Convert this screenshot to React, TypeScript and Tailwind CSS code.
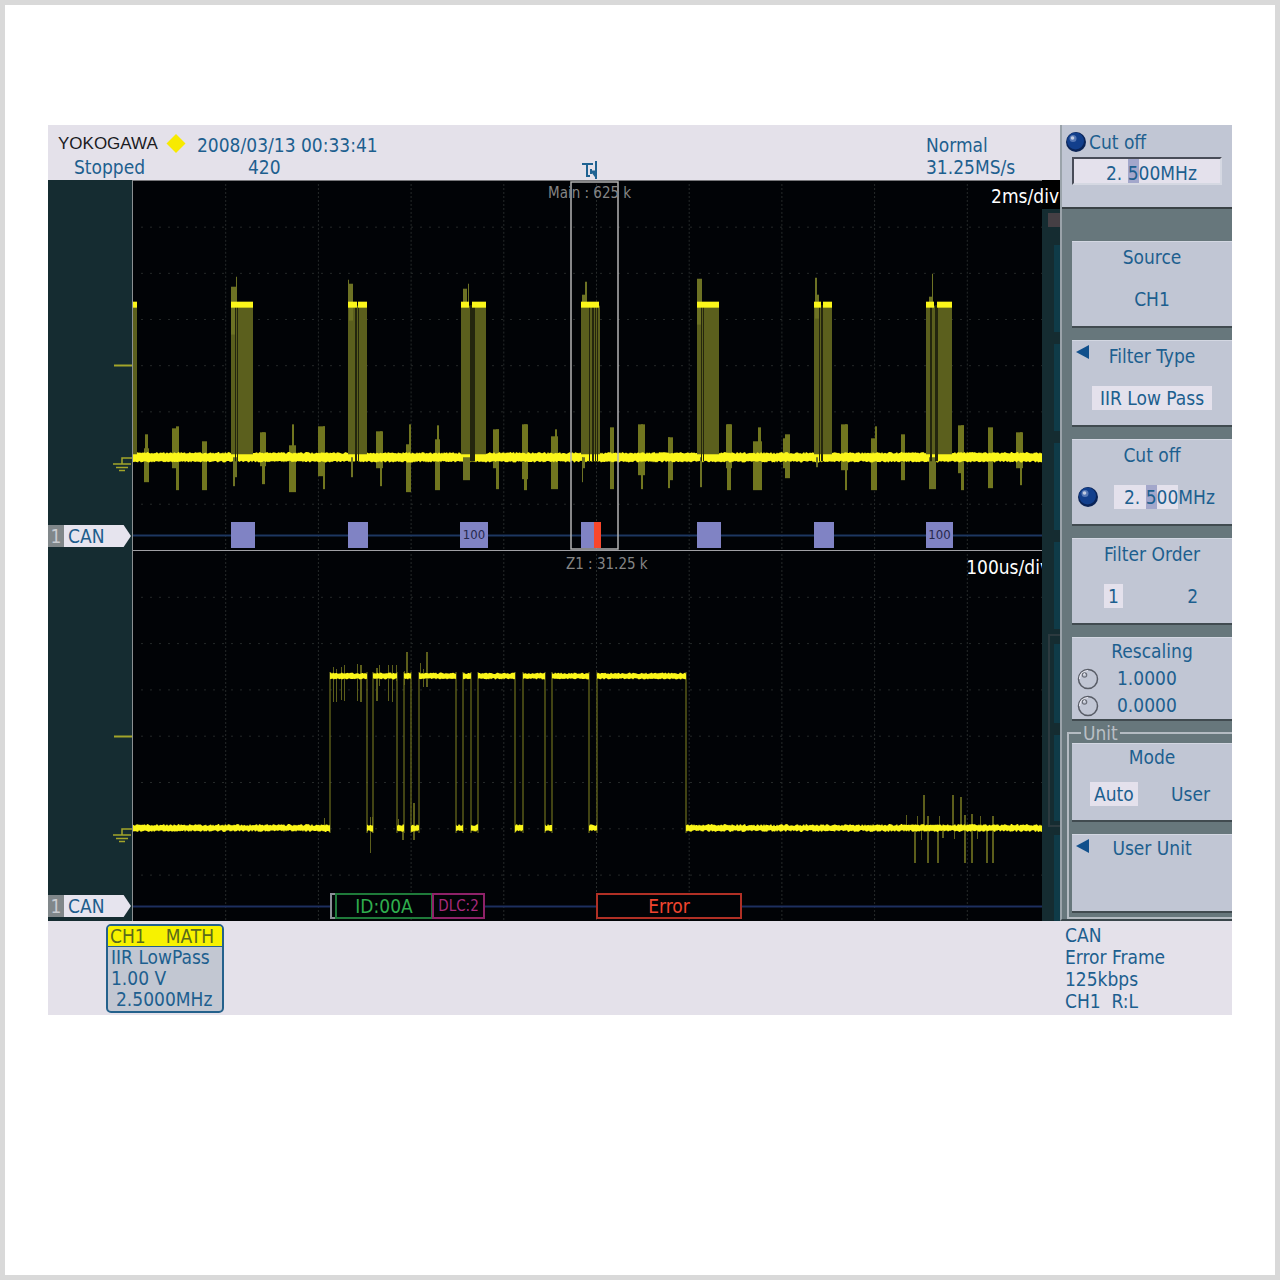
import React, { useState } from 'react';
import clsx from 'clsx';

// Chart space is 909 x 370 for each waveform window
const CHART_W = 909;
const CHART_H = 370;
const BASE_Y = 277;
const HIGH_Y = 125;

interface Bar {
  x: number;
  w: number;
  top: number;
  bottom: number;
}

interface Burst {
  x: number;
  w: number;
  gaps: [number, number][];
  highs: [number, number][];
  spikes: Bar[];
}

const BURSTS: Burst[] = [
  { x: 0, w: 4, gaps: [], highs: [[0, 4]], spikes: [] },
  {
    x: 98, w: 22, gaps: [[102, 1], [104, 1]], highs: [[98, 22]],
    spikes: [{ x: 98, w: 5, top: 106, bottom: 154 }, { x: 103, w: 1, top: 96, bottom: 124 }, { x: 100, w: 2, top: 277, bottom: 306 }, { x: 102, w: 2, top: 277, bottom: 297 }],
  },
  {
    x: 215, w: 19, gaps: [[222, 2], [225, 1]], highs: [[215, 9], [225, 9]],
    spikes: [{ x: 216, w: 4, top: 103, bottom: 140 }, { x: 215, w: 1, top: 99, bottom: 124 }, { x: 218, w: 2, top: 277, bottom: 297 }],
  },
  {
    x: 328, w: 25, gaps: [[337, 5]], highs: [[328, 8], [339, 14]],
    spikes: [{ x: 330, w: 4, top: 108, bottom: 124 }, { x: 335, w: 1, top: 103, bottom: 124 }, { x: 330, w: 7, top: 277, bottom: 300 }],
  },
  {
    x: 448, w: 19, gaps: [[456, 1], [459, 2], [462, 1], [464, 1]], highs: [[448, 18]],
    spikes: [{ x: 449, w: 4, top: 114, bottom: 124 }, { x: 452, w: 2, top: 101, bottom: 124 }, { x: 449, w: 3, top: 277, bottom: 288 }, { x: 449, w: 1, top: 277, bottom: 302 }],
  },
  {
    x: 564, w: 22, gaps: [[568, 1], [570, 1]], highs: [[564, 22]],
    spikes: [{ x: 564, w: 5, top: 98, bottom: 144 }, { x: 567, w: 2, top: 277, bottom: 307 }],
  },
  {
    x: 681, w: 18, gaps: [[686, 1], [688, 2]], highs: [[681, 7], [690, 9]],
    spikes: [{ x: 682, w: 2, top: 97, bottom: 124 }, { x: 682, w: 4, top: 114, bottom: 138 }, { x: 683, w: 2, top: 277, bottom: 287 }],
  },
  {
    x: 793, w: 26, gaps: [[797, 2], [802, 3]], highs: [[793, 8], [804, 15]],
    spikes: [{ x: 799, w: 1, top: 93, bottom: 124 }, { x: 796, w: 4, top: 116, bottom: 124 }, { x: 796, w: 7, top: 277, bottom: 309 }],
  },
];

// Crosstalk blips between the bursts, a wide body plus a thin tail
const BLIPS: Bar[] = [
  { x: 12, w: 3, top: 254, bottom: 280 }, { x: 11, w: 5, top: 268, bottom: 302 },
  { x: 39, w: 7, top: 248, bottom: 288 }, { x: 43, w: 3, top: 246, bottom: 310 },
  { x: 69, w: 5, top: 261, bottom: 310 },
  { x: 127, w: 6, top: 252, bottom: 286 }, { x: 129, w: 3, top: 252, bottom: 304 },
  { x: 156, w: 7, top: 265, bottom: 312 }, { x: 159, w: 2, top: 244, bottom: 280 },
  { x: 185, w: 7, top: 246, bottom: 296 }, { x: 190, w: 2, top: 246, bottom: 309 },
  { x: 243, w: 7, top: 251, bottom: 288 }, { x: 247, w: 2, top: 251, bottom: 306 },
  { x: 273, w: 5, top: 264, bottom: 312 }, { x: 276, w: 2, top: 244, bottom: 280 },
  { x: 302, w: 5, top: 259, bottom: 310 }, { x: 304, w: 2, top: 245, bottom: 280 },
  { x: 360, w: 6, top: 249, bottom: 288 }, { x: 363, w: 3, top: 249, bottom: 309 },
  { x: 389, w: 6, top: 244, bottom: 299 }, { x: 391, w: 3, top: 244, bottom: 310 },
  { x: 418, w: 7, top: 256, bottom: 309 }, { x: 422, w: 2, top: 249, bottom: 280 },
  { x: 477, w: 4, top: 247, bottom: 309 },
  { x: 505, w: 7, top: 244, bottom: 295 }, { x: 508, w: 2, top: 244, bottom: 309 },
  { x: 535, w: 5, top: 257, bottom: 300 }, { x: 535, w: 2, top: 257, bottom: 308 },
  { x: 593, w: 6, top: 244, bottom: 288 }, { x: 594, w: 4, top: 244, bottom: 310 },
  { x: 620, w: 9, top: 261, bottom: 310 }, { x: 625, w: 3, top: 247, bottom: 280 },
  { x: 650, w: 7, top: 258, bottom: 288 }, { x: 652, w: 5, top: 254, bottom: 298 },
  { x: 708, w: 7, top: 244, bottom: 290 }, { x: 712, w: 2, top: 244, bottom: 310 },
  { x: 738, w: 6, top: 258, bottom: 310 }, { x: 742, w: 2, top: 246, bottom: 280 },
  { x: 768, w: 4, top: 254, bottom: 300 },
  { x: 825, w: 6, top: 245, bottom: 293 }, { x: 828, w: 3, top: 245, bottom: 310 },
  { x: 855, w: 5, top: 247, bottom: 308 },
  { x: 883, w: 7, top: 252, bottom: 288 }, { x: 887, w: 2, top: 252, bottom: 305 },
];

const FRAMES = [
  { x: 98, w: 24 },
  { x: 215, w: 20 },
  { x: 327, w: 28, text: '100' },
  { x: 448, w: 20, error: true },
  { x: 564, w: 24 },
  { x: 681, w: 20 },
  { x: 793, w: 27, text: '100' },
];

// [start, end] of the recessive level in the zoomed window
const HIGHS: [number, number][] = [
  [197, 234], [240, 264], [271, 278], [286, 323], [330, 338],
  [345, 382], [390, 412], [419, 456], [464, 553],
];

const ZOOM_SPIKES: Bar[] = [
  { x: 200, w: 1, top: 116, bottom: 151 }, { x: 203, w: 1, top: 118, bottom: 151 },
  { x: 208, w: 1, top: 116, bottom: 149 }, { x: 211, w: 1, top: 114, bottom: 150 },
  { x: 224, w: 1, top: 113, bottom: 150 }, { x: 227, w: 2, top: 114, bottom: 151 },
  { x: 243, w: 2, top: 117, bottom: 150 }, { x: 246, w: 1, top: 114, bottom: 135 },
  { x: 255, w: 1, top: 114, bottom: 150 }, { x: 259, w: 1, top: 114, bottom: 151 }, { x: 263, w: 1, top: 114, bottom: 130 },
  { x: 273, w: 2, top: 101, bottom: 125 }, { x: 271, w: 1, top: 120, bottom: 134 },
  { x: 287, w: 1, top: 112, bottom: 128 }, { x: 290, w: 1, top: 118, bottom: 136 }, { x: 293, w: 2, top: 101, bottom: 136 },
  { x: 237, w: 1, top: 266, bottom: 302 }, { x: 239, w: 1, top: 266, bottom: 282 },
  { x: 269, w: 2, top: 277, bottom: 289 }, { x: 265, w: 1, top: 268, bottom: 280 },
  { x: 280, w: 2, top: 252, bottom: 289 },
  { x: 191, w: 1, top: 267, bottom: 278 },
  { x: 773, w: 1, top: 264, bottom: 277 }, { x: 781, w: 2, top: 277, bottom: 312 },
  { x: 784, w: 1, top: 265, bottom: 277 }, { x: 790, w: 2, top: 244, bottom: 277 },
  { x: 788, w: 1, top: 277, bottom: 289 }, { x: 794, w: 2, top: 265, bottom: 312 },
  { x: 804, w: 2, top: 277, bottom: 312 }, { x: 806, w: 1, top: 265, bottom: 277 },
  { x: 809, w: 2, top: 277, bottom: 287 }, { x: 819, w: 2, top: 244, bottom: 277 },
  { x: 821, w: 1, top: 277, bottom: 288 }, { x: 827, w: 2, top: 246, bottom: 277 },
  { x: 831, w: 2, top: 264, bottom: 312 }, { x: 838, w: 2, top: 263, bottom: 312 },
  { x: 844, w: 1, top: 277, bottom: 288 }, { x: 847, w: 1, top: 265, bottom: 277 },
  { x: 853, w: 2, top: 277, bottom: 312 }, { x: 859, w: 2, top: 265, bottom: 312 },
];

const noise = (n: number) => {
  const v = Math.sin(n * 127.1) * 43758.5453;
  return v - Math.floor(v);
};

// Thick noisy ribbon along a level
const ribbon = (x1: number, x2: number, y: number, half: number, jitter: number) => {
  const upper: string[] = [];
  const lower: string[] = [];
  for (let x = x1; x <= x2; x += 1) {
    upper.push(`${x},${y - half - noise(x + y) * jitter}`);
    lower.unshift(`${x},${y + half + noise(x * 3 + y) * jitter}`);
  }
  return [...upper, ...lower].join(' ');
};

const pct = (v: number) => `${(v / CHART_W) * 100}%`;

const Graticule = () => (
  <g>
    {[1, 2, 3, 4, 5, 6, 7, 8, 9].map((i) => (
      <line key={i} x1={i * 92.7} x2={i * 92.7} y1={3} y2={CHART_H} stroke="#272b2b" strokeDasharray="2 2" />
    ))}
    {[1, 2, 3, 4, 5, 6, 7].map((i) => (
      <line key={i} x1={8} x2={CHART_W} y1={i * 46.3} y2={i * 46.3} stroke="#252929" strokeDasharray="2 7" />
    ))}
  </g>
);

const MainTrace = () => (
  <svg className="absolute inset-0 w-full h-full" viewBox={`0 0 ${CHART_W} ${CHART_H}`} preserveAspectRatio="none">
    <Graticule />
    <line x1={0} x2={CHART_W} y1={355.5} y2={355.5} stroke="#1d3760" strokeWidth={2} />
    <g fill="#71761f">
      {BLIPS.map((b, i) => <rect key={i} x={b.x} y={b.top} width={b.w} height={b.bottom - b.top} />)}
    </g>
    <polygon points={ribbon(0, CHART_W, BASE_Y, 3.5, 1.8)} fill="#fbf61a" />
    {BURSTS.map((b) => (
      <g key={b.x}>
        <rect x={b.x} y={HIGH_Y} width={b.w} height={149} fill="#5b5f1d" />
        {b.spikes.map((s, i) => <rect key={i} x={s.x} y={s.top} width={s.w} height={s.bottom - s.top} fill="#6d7224" />)}
        {b.gaps.map(([x, w]) => <rect key={x} x={x} y={HIGH_Y} width={w} height={156} fill="#24260e" />)}
        {b.highs.map(([x, w]) => <rect key={x} x={x} y={121} width={w} height={6} fill="#fbf61a" />)}
      </g>
    ))}
    <rect x={438} y={1} width={47} height={368} fill="none" stroke="#b4b4b4" strokeWidth={1.5} />
  </svg>
);

const ZoomTrace = () => (
  <svg className="absolute inset-0 w-full h-full" viewBox={`0 0 ${CHART_W} ${CHART_H}`} preserveAspectRatio="none">
    <Graticule />
    <g stroke="#1d2f5e" strokeWidth={2}>
      <line x1={0} x2={197} y1={355.5} y2={355.5} />
      <line x1={352} x2={463} y1={355.5} y2={355.5} />
      <line x1={609} x2={CHART_W} y1={355.5} y2={355.5} />
    </g>
    <g fill="#5c5e1b">
      {ZOOM_SPIKES.map((s, i) => <rect key={i} x={s.x} y={s.top} width={s.w} height={s.bottom - s.top} />)}
    </g>
    <g stroke="#6d6f1d" strokeWidth={1.2}>
      {HIGHS.flat().map((x) => <line key={x} x1={x} x2={x} y1={HIGH_Y - 4} y2={BASE_Y + 5} />)}
    </g>
    <g fill="#fbf61a">
      <polygon points={ribbon(0, 197, BASE_Y, 2, 2)} />
      {HIGHS.map(([a, b]) => <polygon key={a} points={ribbon(a, b, HIGH_Y, 2, 1.5)} />)}
      {HIGHS.slice(1).map(([a], i) => (
        <polygon key={a} points={ribbon(HIGHS[i][1], a, BASE_Y, 2, 2)} />
      ))}
      <polygon points={ribbon(553, CHART_W, BASE_Y, 2, 2)} />
    </g>
  </svg>
);

const Gutter = () => (
  <div className="relative w-[85px] shrink-0 bg-[#152c31] border-r border-[#8b9092]">
    <svg className="absolute right-0 top-[180px] w-5 h-[120px]" viewBox="0 0 20 120" fill="none" stroke="#a3a52a" strokeWidth={1.5}>
      <path d="M2 5.500H20" strokeWidth={2} />
      <path d="M20 98H10v6M1 104h18M4 107.500h12M7 110.500h6" />
    </svg>
    <div className="absolute left-0 bottom-[4px] flex h-[22px] w-[83px] text-[19px] leading-[22px]">
      <span className="w-4 bg-[#80878a] text-center text-[#c9ccd1]">1</span>
      <span className="flex-1 bg-[#e6e4ee] pl-1 text-[#1d5d8c] [clip-path:polygon(0_0,89%_0,100%_50%,89%_100%,0_100%)]">CAN</span>
    </div>
  </div>
);

const BlueKnob = ({ className }: { className?: string }) => (
  <svg className={clsx('w-5 h-5 shrink-0', className)} viewBox="0 0 20 20">
    <circle cx="10" cy="10" r="10" fill="#0a2457" />
    <circle cx="9.500" cy="9" r="8.500" fill="#123f8c" />
    <circle cx="7" cy="6.500" r="3.500" fill="#5577b4" />
    <circle cx="6.500" cy="6" r="1.800" fill="#c3cde2" />
  </svg>
);

const RingKnob = () => (
  <svg className="w-[22px] h-[22px] shrink-0" viewBox="0 0 22 22" fill="none">
    <circle cx="11" cy="11" r="9.500" stroke="#585c66" strokeWidth="1.500" />
    <path d="M2.500 11a8.500 8.500 0 0 1 8.500-8.500" stroke="#e8e8f0" strokeWidth="1.200" />
    <circle cx="7.500" cy="7" r="2.200" stroke="#6b6f79" strokeWidth="1.200" />
    <path d="M6.500 6.500l1.500-1" stroke="#f0f0f5" strokeWidth="1.200" />
  </svg>
);

const Arrow = () => (
  <svg className="absolute left-1 top-1 w-[14px] h-[14px]" viewBox="0 0 14 14">
    <path d="M0 7 13 0v14z" fill="#11508c" />
  </svg>
);

const keyClass = 'relative w-full flex flex-col justify-start bg-[#c1c6d4] border-b-2 border-[#414b50] border-t border-t-[#d3d7e2] text-center';

const Option = ({ name, value, checked, onPick }: { name: string; value: string; checked: boolean; onPick: (v: string) => void }) => (
  <label className={clsx('px-1 leading-6 cursor-pointer', checked && 'bg-[#e4e1ec]')}>
    <input type="radio" className="sr-only" name={name} checked={checked} onChange={() => onPick(value)} />
    {value}
  </label>
);

const SoftKeys = () => {
  const [cutoff, setCutoff] = useState('2. 500MHz');
  const [order, setOrder] = useState('1');
  const [mode, setMode] = useState('Auto');
  const [gain, setGain] = useState('1.0000');
  const [offset, setOffset] = useState('0.0000');

  return (
    <aside className="w-[172px] shrink-0 border-l-2 border-[#9aa3aa] bg-[#67777c] border-b-2 border-b-[#3a464b]">
      <div className="h-[84px] bg-[#c1c6d4] border-b-2 border-[#3a4246] pt-1">
        <label htmlFor="cutoff" className="flex items-center gap-[3px] pl-1 leading-[26px]">
          <BlueKnob />
          Cut off
        </label>
        <div className="relative mx-[10px] mt-[2px] h-7 bg-[#e4e1ec] border-2 border-[#484c58] border-b-[#d5d8e2] border-r-[#d5d8e2]">
          <span className="absolute left-[54px] top-0 w-[11px] h-full bg-[#a3a7cb]" />
          <input
            id="cutoff"
            className="relative w-full h-full pl-8 pb-[3px] bg-transparent outline-none"
            value={cutoff}
            onChange={(e) => setCutoff(e.target.value)}
          />
        </div>
      </div>

      <div className="pl-[10px] pt-8 flex flex-col gap-3">
        <button className={clsx(keyClass, 'h-[87px] gap-[18px] pt-[3px]')}>
          <span className="leading-6">Source</span>
          <span className="leading-6">CH1</span>
        </button>
        <button className={clsx(keyClass, 'h-[87px] gap-[18px] pt-[3px] items-center')}>
          <Arrow />
          <span className="leading-6">Filter Type</span>
          <span className="leading-6 px-2 bg-[#e4e1ec]">IIR Low Pass</span>
        </button>
        <button className={clsx(keyClass, 'h-[87px] gap-[18px] pt-[3px]')}>
          <span className="leading-6">Cut off</span>
          <span className="flex items-center pl-[6px] leading-6">
            <BlueKnob className="mr-4" />
            <span className="bg-[#e4e1ec] pl-[10px]">
              <span className="whitespace-pre">2. </span>
              <span className="inline-block bg-[#a3a7cb]">5</span>
              <span>00</span>
            </span>
            <span>MHz</span>
          </span>
        </button>
        <div className={clsx(keyClass, 'h-[87px] gap-[18px] pt-[3px]')} role="radiogroup" aria-label="Filter Order">
          <div className="leading-6">Filter Order</div>
          <div className="flex justify-between pl-8 pr-[30px]">
            <Option name="order" value="1" checked={order === '1'} onPick={setOrder} />
            <Option name="order" value="2" checked={order === '2'} onPick={setOrder} />
          </div>
        </div>
        <div className={clsx(keyClass, 'h-[84px]')}>
          <div className="leading-[27px]">Rescaling</div>
          <label className="flex items-center h-[27px] gap-[18px] pl-[5px]">
            <RingKnob />
            <input aria-label="Rescaling gain" className="w-[80px] bg-transparent outline-none" value={gain} onChange={(e) => setGain(e.target.value)} />
          </label>
          <label className="flex items-center h-[27px] gap-[18px] pl-[5px]">
            <RingKnob />
            <input aria-label="Rescaling offset" className="w-[80px] bg-transparent outline-none" value={offset} onChange={(e) => setOffset(e.target.value)} />
          </label>
        </div>
      </div>

      <fieldset className="ml-[5px] mt-[2px] pl-[3px] pb-1 border-2 border-r-0 border-[#b4bbc2]">
        <legend className="ml-[9px] px-[2px] leading-5 text-[#b9bfc5]">Unit</legend>
        <div className="flex flex-col gap-3">
          <div className={clsx(keyClass, 'h-[79px] gap-[11px]')} role="radiogroup" aria-label="Mode">
            <div className="leading-[27px]">Mode</div>
            <div className="flex justify-between px-[18px]">
              <Option name="mode" value="Auto" checked={mode === 'Auto'} onPick={setMode} />
              <Option name="mode" value="User" checked={mode === 'User'} onPick={setMode} />
            </div>
          </div>
          <button className={clsx(keyClass, 'h-[79px]')}>
            <Arrow />
            <span className="leading-[27px]">User Unit</span>
          </button>
        </div>
      </fieldset>
    </aside>
  );
};

// Second menu column, mostly covered by the soft keys
const HiddenMenu = () => (
  <div className="w-[18px] shrink-0 flex flex-col bg-black">
    <div className="h-[29px]" />
    <div className="flex-1 flex flex-col bg-[#152c31] pt-1">
      <div className="ml-[6px] h-[14px] bg-[#453f44]" />
      <div className="ml-3 mt-[18px] flex-1 flex flex-col gap-3">
        <div className="h-[87px] bg-[#0f3b48]" />
        <div className="h-[87px] bg-[#0f3b48]" />
        <div className="h-[87px] bg-[#0f3b48]" />
        <div className="h-[87px] bg-[#0f3b48]" />
      </div>
      <div className="ml-[6px] pl-1 pt-2 pb-1 border-l-2 border-y-2 border-[#2c3a3f] flex flex-col gap-3">
        <div className="h-[79px] bg-[#0f3b48]" />
        <div className="h-[86px] bg-[#0f3b48]" />
      </div>
      <div className="ml-3 mt-2 h-[86px] bg-[#0f3b48]" />
    </div>
  </div>
);

const Header = () => (
  <header className="h-[55px] flex bg-[#e4e1ea] pt-[9px] pl-[10px] leading-[22px]">
    <div className="w-[139px]">
      <div className="flex gap-2 h-[22px]">
        <span className="font-['Liberation_Sans',sans-serif] text-[17px] leading-[19px] text-[#1b1b1f]">YOKOGAWA</span>
        <svg className="w-5 h-[19px]" viewBox="0 0 20 20"><path d="M10 0 20 10 10 20 0 10z" fill="#f7ea00" /></svg>
      </div>
      <div className="pl-4">Stopped</div>
    </div>
    <div>
      <div>2008/03/13 00:33:41</div>
      <div className="pl-[51px]">420</div>
    </div>
    <div className="ml-auto w-[134px]">
      <div>Normal</div>
      <div>31.25MS/s</div>
    </div>
  </header>
);

const StatusBar = () => (
  <footer className="flex justify-between bg-[#e4e1ea] pl-[58px] pt-[3px] h-[94px]">
    <div className="w-[118px] h-[89px] border-2 border-[#24618c] rounded-[5px] bg-[#c2c7d2] leading-[21px] overflow-hidden">
      <div className="flex justify-between bg-[#f7f200] border-b border-[#24618c] pl-[2px] pr-2 leading-5 text-[#5a6b1c]">
        <span>CH1</span>
        <span>MATH</span>
      </div>
      <div className="pl-[3px]">IIR LowPass</div>
      <div className="pl-[3px]">1.00 V</div>
      <div className="pl-2">2.5000MHz</div>
    </div>
    <div className="w-[167px] leading-[22px]">
      <div>CAN</div>
      <div>Error Frame</div>
      <div>125kbps</div>
      <div className="whitespace-pre">CH1  R:L</div>
    </div>
  </footer>
);

const App: React.FC = () => (
  <main className="min-h-screen bg-white border-[5px] border-[#d9d9d9] px-[43px] py-[120px]">
    <div className="font-['DejaVu_Sans_Condensed','Noto_Sans',sans-serif] text-[19px] text-[#1d5f8f]">
      <div className="flex">
        <div className="flex-1 min-w-0 flex flex-col">
          <Header />
          <div className="flex">
            <div className="flex-1 min-w-0">
              {/* Main window */}
              <div className="flex h-[371px]">
                <Gutter />
                <div className="relative flex-1 bg-[#010306] border-b border-[#a0a0a4] border-t border-t-[#77777a]">
                  <MainTrace />
                  <svg className="absolute left-1/2 -top-[20px] -ml-[6px] w-4 h-[18px]" viewBox="0 0 16 18" fill="none" stroke="#1f6292" strokeWidth="2">
                    <path d="M0 3h11M5 3v13M5 15h3M14 0v18M9 8v5" />
                    <path d="M8 9.500h6v8z" fill="#1f6292" stroke="none" />
                  </svg>
                  <span className="absolute left-[415px] top-[2px] text-[15px] leading-5 text-[#858585]">Main : 625 k</span>
                  <span className="absolute -right-[17px] top-1 z-10 leading-[22px] text-white">2ms/div</span>
                  {FRAMES.map((f) => (
                    <div
                      key={f.x}
                      className={clsx(
                        'absolute bottom-[2px] h-[26px] bg-[#8083c4] text-center text-[13px] leading-[26px] text-[#26284c]',
                        f.error && 'border-r-[7px] border-[#f8472b]',
                      )}
                      style={{ left: pct(f.x), width: pct(f.w) }}
                    >
                      {f.text}
                    </div>
                  ))}
                </div>
              </div>

              {/* Zoom window */}
              <div className="flex h-[370px]">
                <Gutter />
                <div className="relative flex-1 overflow-hidden bg-[#010306]">
                  <ZoomTrace />
                  <span className="absolute left-[433px] top-[3px] text-[15px] leading-5 text-[#858585]">Z1 : 31.25 k</span>
                  {/* runs under the hidden menu column */}
                  <span className="absolute -right-2 top-[5px] leading-[22px] text-white">100us/div</span>
                  <div className="absolute bottom-[2px] h-[26px] border-2 border-[#8a9096]" style={{ left: pct(197), width: pct(7) }} />
                  <div
                    className="absolute bottom-[2px] h-[26px] border-2 border-[#1f7a3a] bg-[#010306] text-center leading-[22px] text-[#2fae4e]"
                    style={{ left: pct(202), width: pct(98) }}
                  >
                    ID:00A
                  </div>
                  <div
                    className="absolute bottom-[2px] h-[26px] border-2 border-[#8e2268] bg-[#010306] text-center text-[15px] leading-[22px] text-[#a82a7c]"
                    style={{ left: pct(299), width: pct(53) }}
                  >
                    DLC:2
                  </div>
                  <div
                    className="absolute bottom-[2px] h-[26px] border-2 border-[#b03025] bg-[#010306] text-center leading-[22px] text-[#f0452f]"
                    style={{ left: pct(463), width: pct(146) }}
                  >
                    Error
                  </div>
                </div>
              </div>
            </div>
            <HiddenMenu />
          </div>
        </div>
        <SoftKeys />
      </div>
      <StatusBar />
    </div>
  </main>
);

export default App;
